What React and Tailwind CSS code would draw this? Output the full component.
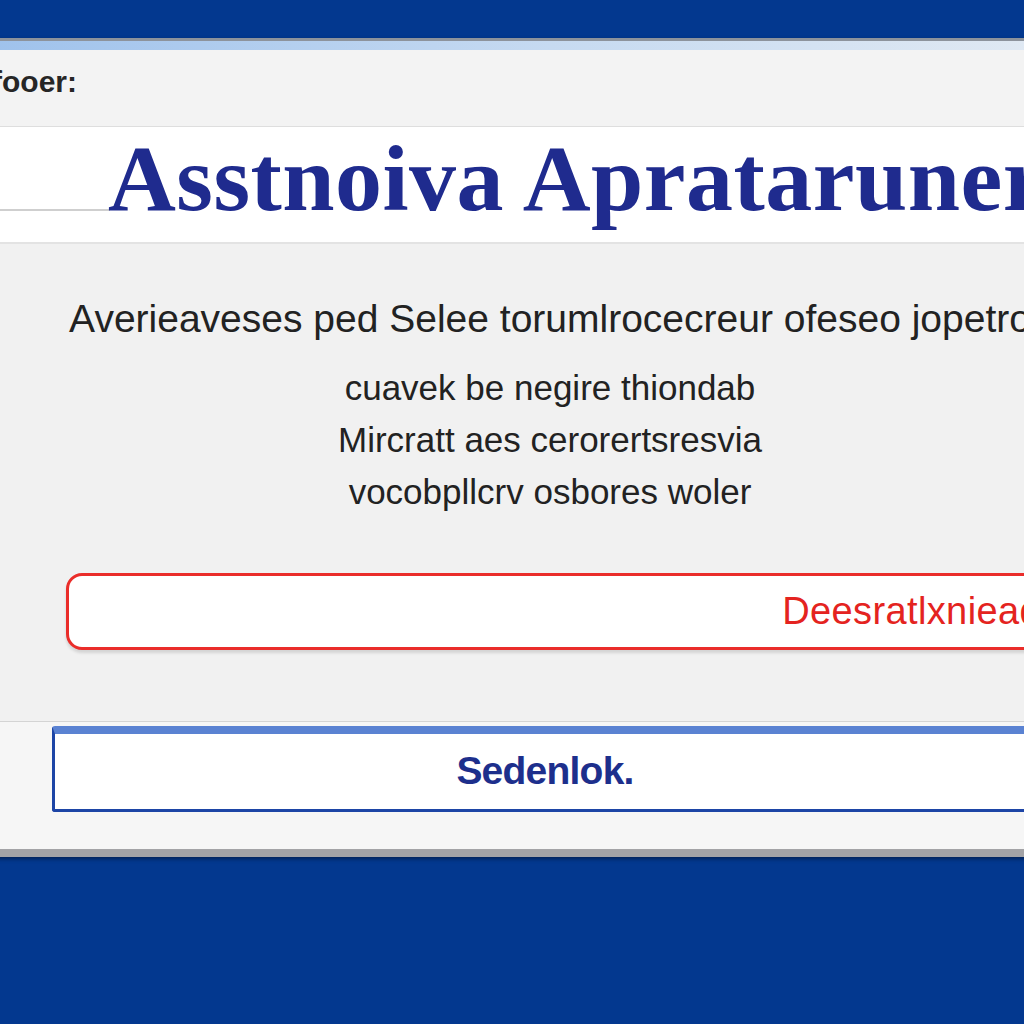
import React from 'react';

export default function App() {
  return (
    <div className="w-[1024px] h-[1024px] overflow-hidden bg-[#03388f] pt-[38px]">
      {/* Window */}
      <div className="w-[1120px] -ml-[10px] bg-[#f1f1f1] border-t-[3px] border-[#8d939c] border-b-[8px] border-b-[#a3a3a6] shadow-[0_2px_4px_rgba(0,0,0,0.4)]">
        {/* Glass strip */}
        <div className="h-[9px] bg-gradient-to-r from-[#9fc2ec] via-[#c6daf1] to-[#e4ebf3]" />

        {/* Title bar */}
        <div className="h-[77px] bg-[#f3f3f3] border-b border-[#dedede] pl-[2px] pt-[9px]">
          <span className="font-['Liberation_Sans',Arial,sans-serif] text-[30px] font-semibold text-[#262626]">fooer:</span>
        </div>

        {/* Heading band */}
        <div className="relative h-[117px] bg-white border-b-2 border-[#e3e3e3]">
          <div className="absolute left-0 top-[82px] w-[120px] h-[2px] bg-[#cfcfcf]" />
          <h1 className="relative pl-[118px] pt-[1px] whitespace-nowrap font-['Liberation_Serif','Times_New_Roman',serif] text-[94px] leading-[100px] font-bold tracking-[0.005em] text-[#1f2b8e]">
            Asstnoiva Aprataruners
          </h1>
        </div>

        {/* Body */}
        <div className="h-[477px] flex flex-col items-center pt-[50px] font-['Liberation_Sans',Arial,sans-serif] text-[#222]">
          <p className="whitespace-nowrap text-[39px] leading-[50px]">
            Averieaveses ped Selee torumlrocecreur ofeseo jopetro
          </p>
          <div className="mt-[18px] flex flex-col items-center text-[35px] leading-[52px]">
            <p>cuavek be negire thiondab</p>
            <p>Mircratt aes cerorertsresvia</p>
            <p>vocobpllcrv osbores woler</p>
          </div>

          {/* Red field */}
          <div className="mt-[55px] self-stretch ml-[76px] mr-[60px] h-[77px] rounded-[16px] border-[3px] border-[#ea2d2a] bg-white shadow-[0_3px_3px_rgba(0,0,0,0.12)] flex items-center justify-end pr-[6px]">
            <span className="text-[#e42320] text-[38px] tracking-[0.01em]">Deesratlxniead</span>
          </div>
        </div>

        {/* Footer */}
        <div className="h-[128px] bg-[#f6f6f6] border-t border-[#d4d4d4] pt-[4px]">
          <div className="ml-[62px] mr-[72px] h-[86px] rounded-[3px] border-[3px] border-[#1d45a6] border-t-[8px] border-t-[#5a82d2] bg-white flex items-center justify-center">
            <span className="font-['Liberation_Sans',Arial,sans-serif] text-[39px] font-bold tracking-[-0.02em] text-[#1d2f8c]">Sedenlok.</span>
          </div>
        </div>
      </div>
    </div>
  );
}
